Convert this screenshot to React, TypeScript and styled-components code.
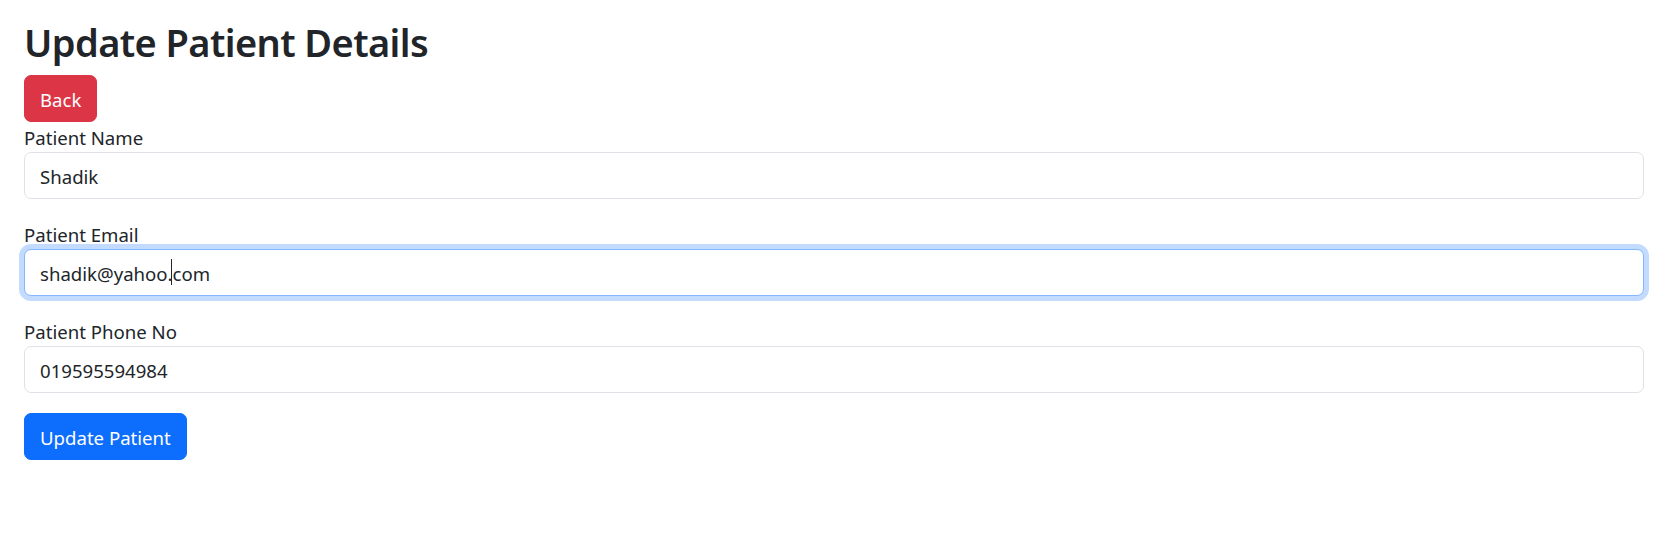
import React from "react";
import styled, { createGlobalStyle } from "styled-components";

const Global = createGlobalStyle`
  html, body { margin: 0; padding: 0; background: #fff; }
  body { font-family: "Noto Sans", "Open Sans", sans-serif; color: #212529; }
  * { box-sizing: border-box; }
`;

const Page = styled.div`
  padding: 18px 27px 0 24px;
`;

const Title = styled.h2`
  margin: 0 0 9px;
  font-size: 38px;
  line-height: 48px;
  font-weight: 600;
  letter-spacing: -0.6px;
  color: #212529;
`;

const Button = styled.button<{ $variant: "danger" | "primary" }>`
  display: inline-block;
  height: 47px;
  padding: 2px 15px 0;
  border: 1px solid ${(p) => (p.$variant === "danger" ? "#dc3545" : "#0d6efd")};
  background: ${(p) => (p.$variant === "danger" ? "#dc3545" : "#0d6efd")};
  color: #fff;
  border-radius: 7px;
  font-family: inherit;
  font-size: 18.6px;
  line-height: 30px;
  cursor: pointer;
`;

const Field = styled.div`
  margin-bottom: 20px;
`;

const Label = styled.label`
  display: block;
  padding-top: 1px;
  font-size: 18.6px;
  line-height: 29px;
`;

const InputWrap = styled.div`
  position: relative;
`;

const Input = styled.input<{ $focus?: boolean }>`
  display: block;
  width: 100%;
  height: 47px;
  padding: 2px 15px 0;
  font-family: inherit;
  font-size: 18.6px;
  color: #212529;
  background: #fff;
  border: 1px solid ${(p) => (p.$focus ? "#86b7fe" : "#dee2e6")};
  border-radius: 7px;
  box-shadow: ${(p) => (p.$focus ? "0 0 0 5px rgba(13,110,253,0.25)" : "none")};
  outline: none;
`;

const Caret = styled.span`
  position: absolute;
  top: 10px;
  left: 147px;
  width: 1px;
  height: 26px;
  background: #212529;
`;

export default function App() {
  return (
    <>
      <Global />
      <Page>
        <Title>Update Patient Details</Title>
        <Button $variant="danger">Back</Button>
        <Field>
          <Label>Patient Name</Label>
          <Input defaultValue="Shadik" />
        </Field>
        <Field>
          <Label>Patient Email</Label>
          <InputWrap>
            <Input $focus defaultValue="shadik@yahoo.com" />
            <Caret />
          </InputWrap>
        </Field>
        <Field>
          <Label>Patient Phone No</Label>
          <Input defaultValue="019595594984" />
        </Field>
        <Button $variant="primary">Update Patient</Button>
      </Page>
    </>
  );
}
